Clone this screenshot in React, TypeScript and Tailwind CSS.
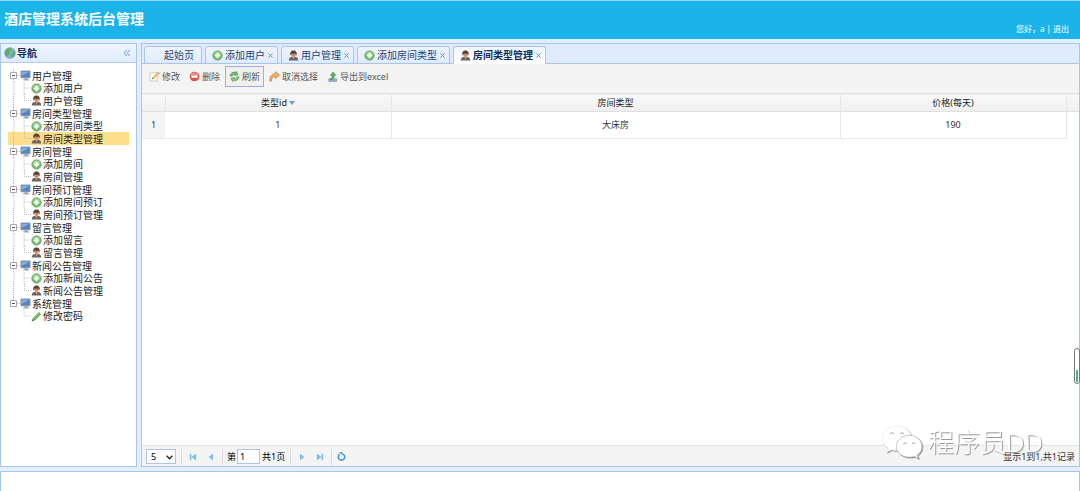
import type { ReactNode } from "react";
import clsx from "clsx";

type IconName = "monitor" | "add" | "user" | "pencil";

type TreeNode = {
  text: string;
  icon: IconName;
  selected?: boolean;
  children?: TreeNode[];
};

const menu: TreeNode[] = [
  {
    text: "用户管理",
    icon: "monitor",
    children: [
      { text: "添加用户", icon: "add" },
      { text: "用户管理", icon: "user" },
    ],
  },
  {
    text: "房间类型管理",
    icon: "monitor",
    children: [
      { text: "添加房间类型", icon: "add" },
      { text: "房间类型管理", icon: "user", selected: true },
    ],
  },
  {
    text: "房间管理",
    icon: "monitor",
    children: [
      { text: "添加房间", icon: "add" },
      { text: "房间管理", icon: "user" },
    ],
  },
  {
    text: "房间预订管理",
    icon: "monitor",
    children: [
      { text: "添加房间预订", icon: "add" },
      { text: "房间预订管理", icon: "user" },
    ],
  },
  {
    text: "留言管理",
    icon: "monitor",
    children: [
      { text: "添加留言", icon: "add" },
      { text: "留言管理", icon: "user" },
    ],
  },
  {
    text: "新闻公告管理",
    icon: "monitor",
    children: [
      { text: "添加新闻公告", icon: "add" },
      { text: "新闻公告管理", icon: "user" },
    ],
  },
  {
    text: "系统管理",
    icon: "monitor",
    children: [{ text: "修改密码", icon: "pencil" }],
  },
];

const tabs: { text: string; icon?: IconName; active?: boolean }[] = [
  { text: "起始页" },
  { text: "添加用户", icon: "add" },
  { text: "用户管理", icon: "user" },
  { text: "添加房间类型", icon: "add" },
  { text: "房间类型管理", icon: "user", active: true },
];

const rows = [{ id: 1, name: "大床房", price: 190 }];

export default function App() {
  return (
    <div className="relative flex min-h-screen flex-col bg-[#e2eefc] font-['Noto_Sans','Noto_Sans_CJK_SC',sans-serif] text-[#333]">
      <TopBar />
      <div className="mt-1 flex flex-1 items-stretch gap-1">
        <Sidebar />
        <Workspace />
      </div>
      <footer className="mt-1 h-5 border-x border-t border-[#a9c5ea] bg-white" />
      <Watermark />
      <ScrollMark />
    </div>
  );
}

function TopBar() {
  return (
    <header className="flex h-[39px] items-center justify-between border-t border-[#8ed7f3] bg-[#1bb4e9] pr-[11px] pl-1 text-white">
      <h1 className="pb-[2px] text-[14px] leading-5 font-bold">
        酒店管理系统后台管理
      </h1>
      <p className="self-end pb-1 text-[8px] leading-3">
        您好，a | <a href="#logout">退出</a>
      </p>
    </header>
  );
}

function Sidebar() {
  return (
    <aside className="w-[137px] shrink-0 border border-[#a9c5ea] bg-white">
      <div className="flex h-[19px] items-center border-b border-[#b4cdee] bg-linear-to-b from-[#eff5ff] to-[#dfebfd] pr-[5px] pl-[3px]">
        <GlobeIcon />
        <h2 className="ml-px text-[10px] leading-3 font-bold text-[#0e2d5f]">
          导航
        </h2>
        <button type="button" aria-label="收起导航" className="ml-auto">
          <svg viewBox="0 0 9 9" className="h-2 w-2">
            <path
              d="M4.2 1 1.3 4.5 4.2 8M7.6 1 4.7 4.5 7.6 8"
              fill="none"
              stroke="#8db2e3"
              strokeWidth="1.2"
            />
          </svg>
        </button>
      </div>
      <ul className="mx-[7px] mt-[6px] text-[10px] text-[#222]">
        {menu.map((group, index) => (
          <TreeGroup
            key={group.text}
            group={group}
            last={index === menu.length - 1}
          />
        ))}
      </ul>
    </aside>
  );
}

function TreeGroup({ group, last }: { group: TreeNode; last: boolean }) {
  const children = group.children ?? [];

  return (
    <li>
      <div className="flex h-[13px] items-center">
        <ExpanderIcon last={last} />
        <NodeIcon name={group.icon} />
        <span className="ml-px leading-3">{group.text}</span>
      </div>
      <ul>
        {children.map((node, index) => (
          <li
            key={node.text}
            className={clsx(
              "flex items-center",
              index === 0 ? "h-[12px]" : "h-[13px]",
              node.selected && "bg-[#fddf8b]",
            )}
          >
            <svg viewBox="0 0 23 13" className="h-full w-[23px] shrink-0">
              <path
                d={clsx(
                  !last && "M5.5 0V13",
                  index === children.length - 1
                    ? "M16.5 0V6.5H23"
                    : "M16.5 0V13M16.5 6.5H23",
                )}
                fill="none"
                stroke="#b9b9b9"
                strokeDasharray="1 1"
              />
            </svg>
            <NodeIcon name={node.icon} />
            <a href="#node" className="ml-px leading-3">
              {node.text}
            </a>
          </li>
        ))}
      </ul>
    </li>
  );
}

function Workspace() {
  return (
    <main className="flex min-w-0 flex-1 flex-col border border-[#a9c5ea] bg-white">
      <TabStrip />
      <Toolbar />
      <RoomTypeTable />
      <Pager />
    </main>
  );
}

function TabStrip() {
  return (
    <ul className="flex h-5 items-end gap-[3px] border-b border-[#a9c5ea] bg-[#dfebfd] pl-[2px]">
      {tabs.map((tab) => (
        <li
          key={tab.text}
          className={clsx(
            "-mb-px flex h-[18px] items-center gap-[2px] rounded-t-[3px] border border-[#a9c5ea] pl-[6px] text-[10px]",
            tab.icon ? "pr-[4px]" : "pr-[7px]",
            tab.active
              ? "border-b-white bg-linear-to-b from-[#eff5ff] to-white font-bold text-[#0e2d5f]"
              : "bg-linear-to-b from-[#eff5ff] to-[#dfebfd] text-[#274472]",
          )}
        >
          {tab.icon ? (
            <NodeIcon name={tab.icon} />
          ) : (
            <span className="w-[11px]" />
          )}
          <button type="button" className="leading-3">
            {tab.text}
          </button>
          {tab.icon && (
            <button
              type="button"
              aria-label={`关闭${tab.text}`}
              className="ml-px"
            >
              <svg viewBox="0 0 5 5" className="h-[5px] w-[5px]">
                <path d="M.5.5 4.5 4.5M4.5.5.5 4.5" stroke="#7389ad" />
              </svg>
            </button>
          )}
        </li>
      ))}
    </ul>
  );
}

function Toolbar() {
  return (
    <div className="flex h-[29px] items-center gap-px bg-[#f4f4f4] pb-[4px] pl-[3px] text-[#555]">
      <ToolButton label="修改">
        <path d="M1 2H9V11H1Z" fill="#fff" stroke="#bbb" strokeWidth=".8" />
        <path d="M3 9 4 6.5 9 1.5 11 3.4 6 8.2Z" fill="#f2bd5a" />
        <path d="M9 1.5 10 .8 11.7 2.5 11 3.4Z" fill="#d97f6a" />
        <path d="M3 9 3.6 7.3 5 8.4Z" fill="#665" />
      </ToolButton>
      <ToolButton label="删除">
        <circle cx="6" cy="6" r="5.3" fill="#d9534c" />
        <path d="M1.4 5a4.7 4.7 0 0 1 9.2 0Z" fill="#ec8a82" />
        <path d="M2.6 4.8H9.4V7.4H2.6Z" fill="#fff" />
      </ToolButton>
      <ToolButton label="刷新" focused>
        <path
          d="M1 5.4C1.4 2.6 4 .8 7 1.3L8 .4 9.8 4.2 5.7 4.9 6.5 3.6C5 3.3 3.8 4 3.5 5.6Z"
          fill="#78b877"
          stroke="#438c48"
          strokeWidth=".6"
        />
        <path
          d="M11 6.4C10.6 9.3 8 11.2 5 10.7L4 11.6 2.2 7.8 6.3 7.1 5.5 8.4C7 8.7 8.2 8 8.5 6.3Z"
          fill="#8fcc86"
          stroke="#438c48"
          strokeWidth=".6"
        />
      </ToolButton>
      <ToolButton label="取消选择">
        <path
          d="M1 11C.4 6 2.8 3 7 3V.8L11.6 4.6 7 8.3V6.2C4.2 6.1 2.6 7.6 2.7 11Z"
          fill="#f4b25e"
          stroke="#bd7a35"
          strokeWidth=".7"
        />
      </ToolButton>
      <ToolButton label="导出到excel">
        <path
          d="M2 8.5H10.5V11.3H2Z"
          fill="#8eb3d4"
          stroke="#5583ad"
          strokeWidth=".6"
        />
        <path
          d="M3 9.5C5.2 8.7 5.5 7 5.4 4.8H3.6L6.7 1 9.8 4.8H8C8.1 7.7 6.5 9.6 3 9.5Z"
          fill="#58ad55"
          stroke="#3b8544"
          strokeWidth=".5"
        />
      </ToolButton>
    </div>
  );
}

function ToolButton({
  label,
  focused,
  children,
}: {
  label: string;
  focused?: boolean;
  children: ReactNode;
}) {
  return (
    <button
      type="button"
      className={clsx(
        "flex h-[21px] items-center gap-[2px] border px-[3px] text-[9px] leading-3",
        focused ? "border-[#a3a8e6] bg-[#f0f0f0]" : "border-transparent",
      )}
    >
      <svg viewBox="0 0 12 12" className="h-[11px] w-[11px]">
        {children}
      </svg>
      {label}
    </button>
  );
}

function RoomTypeTable() {
  return (
    <div className="flex-1">
      <table className="w-full table-fixed border-collapse text-center text-[9px] leading-3">
        <colgroup>
          <col className="w-[23px]" />
          <col className="w-[226px]" />
          <col />
          <col className="w-[226px]" />
          <col className="w-[13px]" />
        </colgroup>
        <thead>
          <tr className="h-[18px] border-y border-[#e0e0e0] bg-linear-to-b from-[#f9f9f9] to-[#efefef] text-[#222]">
            <th className="border-r border-[#e6e6e6]" aria-label="行号" />
            <th className="border-r border-[#e6e6e6] font-normal">
              <span className="inline-flex items-center gap-[2px]">
                类型id
                <svg viewBox="0 0 6 4" className="h-1 w-[6px]">
                  <path d="M0 0H6L3 4Z" fill="#6f9bd0" />
                </svg>
              </span>
            </th>
            <th className="border-r border-[#e6e6e6] font-normal">房间类型</th>
            <th className="border-r border-[#e6e6e6] font-normal">
              价格(每天)
            </th>
            <th aria-label="操作" />
          </tr>
        </thead>
        <tbody>
          {rows.map((row, index) => (
            <tr key={row.id} className="h-[27px]">
              <td className="border-b border-[#e9e9e9] bg-[#f5f5f5]">
                {index + 1}
              </td>
              <td className="border-r border-b border-[#e9e9e9]">{row.id}</td>
              <td className="border-r border-b border-[#e9e9e9]">{row.name}</td>
              <td className="border-r border-b border-[#e9e9e9]">
                {row.price}
              </td>
              <td />
            </tr>
          ))}
        </tbody>
      </table>
    </div>
  );
}

function Pager() {
  return (
    <div className="flex h-[21px] items-center border-t border-[#e4e4e4] bg-[#f4f4f4] pt-px pr-1 pl-1 text-[9px] leading-3 text-black">
      <span className="relative mr-[3px]">
        <select
          aria-label="每页条数"
          defaultValue="5"
          className="block h-[15px] w-[30px] appearance-none border border-[#a9c5ea] bg-white pl-1"
        >
          <option>5</option>
          <option>10</option>
          <option>20</option>
        </select>
        <svg
          viewBox="0 0 7 5"
          className="pointer-events-none absolute top-[6px] right-[3px] h-[5px] w-[7px]"
        >
          <path
            d="M.7.8 3.5 3.7 6.3.8"
            fill="none"
            stroke="#222"
            strokeWidth="1.4"
          />
        </svg>
      </span>
      <Separator />
      <PageButton label="第一页">
        <path d="M1 1H3V9H1ZM9 .5V9.5L3 5Z" />
      </PageButton>
      <PageButton label="上一页">
        <path d="M7.5.5V9.5L2 5Z" />
      </PageButton>
      <Separator />
      <label className="ml-[2px] flex items-center gap-px">
        第
        <input
          type="text"
          defaultValue="1"
          className="h-[15px] w-[23px] border border-[#a9c5ea] bg-white px-[2px]"
        />
      </label>
      <span className="mr-[3px] ml-[2px]">共1页</span>
      <Separator />
      <PageButton label="下一页">
        <path d="M2.5.5V9.5L8 5Z" />
      </PageButton>
      <PageButton label="最后一页">
        <path d="M9 1H7V9H9ZM1 .5V9.5L7 5Z" />
      </PageButton>
      <Separator />
      <button type="button" aria-label="刷新列表" className="ml-[3px]">
        <svg viewBox="0 0 10 10" className="h-[9px] w-[9px]">
          <path
            d="M3.2 2.3A3.6 3.6 0 1 0 6.8 2.3"
            fill="none"
            stroke="#3f97d0"
            strokeWidth="1.7"
          />
          <path d="M2.6 0H6.2V3.8Z" fill="#3f97d0" />
        </svg>
      </button>
      <span className="ml-auto text-[#333]">显示1到1,共1记录</span>
    </div>
  );
}

function Separator() {
  return <span className="mx-[2px] h-4 w-px bg-[#dadada]" />;
}

function PageButton({
  label,
  children,
}: {
  label: string;
  children: ReactNode;
}) {
  return (
    <button
      type="button"
      aria-label={label}
      className="flex h-4 w-[18px] items-center justify-center"
    >
      <svg viewBox="0 0 10 10" className="h-2 w-2" fill="#83bfe4">
        {children}
      </svg>
    </button>
  );
}

function ExpanderIcon({ last }: { last: boolean }) {
  return (
    <svg viewBox="0 0 12 13" className="h-[13px] w-[12px] shrink-0">
      <path
        d={last ? "M5.5 0V3M9 6.5H12" : "M5.5 0V3M5.5 10V13M9 6.5H12"}
        stroke="#b9b9b9"
        strokeDasharray="1 1"
      />
      <path d="M2.5 3.5H8.5V9.5H2.5Z" fill="#fff" stroke="#a8a8a8" />
      <path d="M4 6.5H7" stroke="#555" />
    </svg>
  );
}

function NodeIcon({ name }: { name: IconName }) {
  return (
    <svg viewBox="0 0 12 12" className="h-[11px] w-[11px] shrink-0">
      {name === "monitor" && (
        <>
          <path
            d="M1 1H11V8.6H1Z"
            fill="#5585bf"
            stroke="#8d9db3"
            strokeWidth=".8"
          />
          <path d="M1.8 1.8H10.2L1.8 6.6Z" fill="#86b1df" />
          <path d="M5 8.8H8V10H10V11.4H3.5V10H5Z" fill="#9aa6b5" />
        </>
      )}
      {name === "add" && (
        <>
          <circle
            cx="6"
            cy="6"
            r="5.2"
            fill="#6fbb66"
            stroke="#559a50"
            strokeWidth=".6"
          />
          <path d="M1.6 5a4.6 4.6 0 0 1 8.8 0Z" fill="#9ad190" />
          <path d="M5 3H7V5H9V7H7V9H5V7H3V5H5Z" fill="#fff" />
        </>
      )}
      {name === "user" && (
        <>
          <path
            d="M.8 11.4C.8 8.6 2.6 7.4 6 7.4S11.2 8.6 11.2 11.4Z"
            fill="#6c6461"
          />
          <path d="M4.6 7.4H7.4L6 10.4Z" fill="#d99a80" />
          <circle cx="6" cy="4.8" r="2.7" fill="#c98f66" />
          <path
            d="M2.6 6C1.9 2 3.5.5 6 .5S10.1 2 9.4 6L8.2 4H3.8Z"
            fill="#5f4038"
          />
        </>
      )}
      {name === "pencil" && (
        <>
          <path d="M.8 11.3 2 7.7 8.6 1.2 11 3.5 4.4 10.1Z" fill="#62b252" />
          <path d="M2 7.7 8.6 1.2 9.5 2 3 8.6Z" fill="#98d487" />
          <path d="M.8 11.3 1.5 9.2 3 10.6Z" fill="#3b5a34" />
        </>
      )}
    </svg>
  );
}

function GlobeIcon() {
  return (
    <svg viewBox="0 0 12 12" className="h-3 w-3">
      <circle
        cx="6"
        cy="6"
        r="5.5"
        fill="#7fb0da"
        stroke="#8aa9b8"
        strokeWidth=".5"
      />
      <path
        d="M1 4.4C2.3 1.8 4.4.9 6.6 1.1L7.4 3 5.2 4.6 6 6.6 4 8.3 3.6 10.6C1.5 9.2.6 6.6 1 4.4ZM8.3 4.7 11 4.2C11.6 7 10.5 9.4 8.3 10.6L7.2 8.4Z"
        fill="#62ae5f"
      />
    </svg>
  );
}

function Watermark() {
  return (
    <div className="pointer-events-none absolute right-[37px] bottom-[31px] flex items-center gap-1 text-[26px] leading-9 font-light text-white [filter:drop-shadow(1px_1px_0_#9a9a9a)]">
      <svg viewBox="0 0 44 38" className="h-9 w-11">
        <path
          d="M17 2C8 2 1 8 1 15.2 1 19.5 3.4 23 7 25.4L5.6 30 11 27.2C13 27.9 15 28 17 28 26 28 32 22 32 15.2S26 2 17 2Z"
          fill="#fff"
          stroke="#e4e4e4"
          strokeWidth=".5"
        />
        <path
          d="M30 12C22 12 16 17.2 16 23.7S22 35 30 35C31.8 35 33.5 34.7 35 34.2L39.4 36.5 38.2 32.7C41.4 30.6 43 27.4 43 23.7 43 17.2 37.5 12 30 12Z"
          fill="#fff"
          stroke="#aaa"
          strokeWidth=".7"
        />
        <path
          d="M9.5 10.5Q11.5 7.5 13.5 10.5M20 10.5Q22 7.5 24 10.5M23.5 21Q25.2 18.5 27 21M32.5 21Q34.2 18.5 36 21"
          fill="none"
          stroke="#999"
        />
      </svg>
      <span>程序员DD</span>
    </div>
  );
}

function ScrollMark() {
  return (
    <div className="absolute right-0 bottom-[107px] flex h-9 w-[6px] flex-col justify-end rounded-[3px] border border-[#777] bg-white p-px">
      <span className="h-3 bg-[#3fc07c]" />
    </div>
  );
}
